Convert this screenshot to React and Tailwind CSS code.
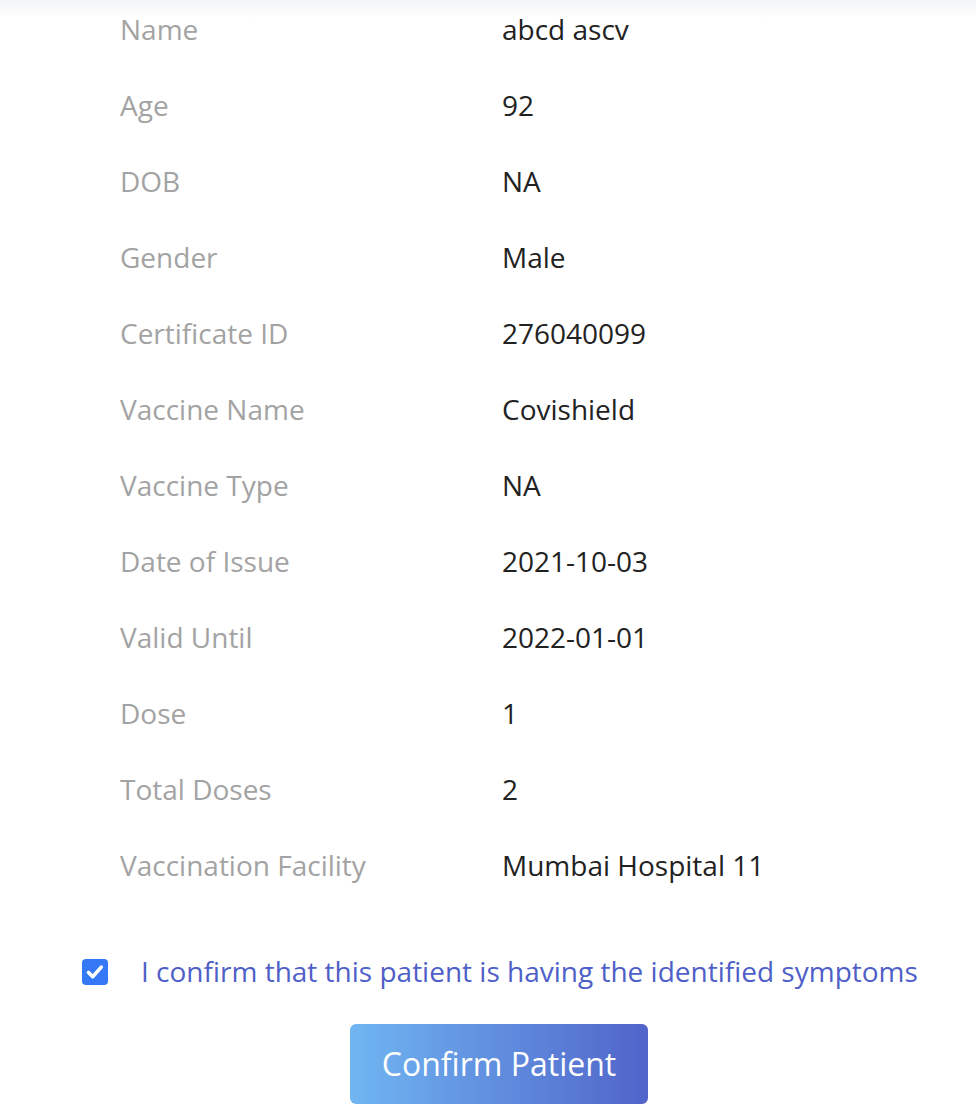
const ROWS = [
  ["Name", "abcd ascv"],
  ["Age", "92"],
  ["DOB", "NA"],
  ["Gender", "Male"],
  ["Certificate ID", "276040099"],
  ["Vaccine Name", "Covishield"],
  ["Vaccine Type", "NA"],
  ["Date of Issue", "2021-10-03"],
  ["Valid Until", "2022-01-01"],
  ["Dose", "1"],
  ["Total Doses", "2"],
  ["Vaccination Facility", "Mumbai Hospital 11"],
];

export default function App() {
  return (
    <div
      className="relative h-[1114px] w-[976px] overflow-hidden bg-white"
      style={{ fontFamily: '"Open Sans", "Noto Sans", sans-serif' }}
    >
      {/* faint header shadow */}
      <div className="pointer-events-none absolute inset-x-0 top-0 h-[18px] bg-gradient-to-b from-[#f3f4f6] to-white" />

      <div className="relative -mt-[9px]">
        {ROWS.map(([label, value]) => (
          <div key={label} className="flex h-[76px] items-center text-[28px]">
            <div className="w-[502px] shrink-0 pl-[120px] text-[#a3a3a3]">{label}</div>
            <div className="text-[#222222]">{value}</div>
          </div>
        ))}
      </div>

      <div className="mt-[49px] flex items-center pl-[82px]">
        <span className="flex h-[26px] w-[26px] items-center justify-center rounded-[4px] bg-[#3478f6]">
          <svg viewBox="0 0 26 26" className="h-[26px] w-[26px]" fill="none">
            <path d="M6.5 13.5l4.2 4.2 8.6-9.6" stroke="white" strokeWidth="3.6" strokeLinecap="round" strokeLinejoin="round" />
          </svg>
        </span>
        <span className="ml-[33px] text-[28px] leading-[1.4] text-[#4f5fc8]">
          I confirm that this patient is having the identified symptoms
        </span>
      </div>

      <div className="mt-[33px] flex justify-center pl-[22px]">
        <button className="h-[80px] w-[298px] rounded-[6px] bg-gradient-to-r from-[#70b6f2] to-[#5164c9] text-[32px] text-white">
          Confirm Patient
        </button>
      </div>
    </div>
  );
}
